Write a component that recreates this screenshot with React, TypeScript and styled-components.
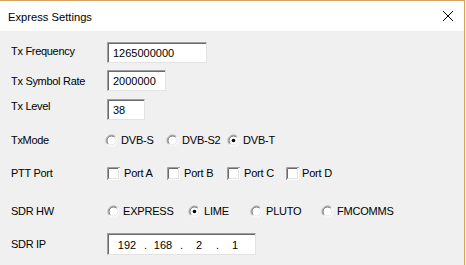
import React from "react";
import styled, { createGlobalStyle } from "styled-components";

const Global = createGlobalStyle`
  html, body { margin: 0; padding: 0; }
  body {
    width: 466px;
    height: 265px;
    overflow: hidden;
    background: #f8f6f2;
    font-family: "Liberation Sans", Arial, sans-serif;
  }
`;

const Screen = styled.div`
  width: 466px;
  height: 265px;
  display: flex;
  background: #f8f6f2;
`;

const Window = styled.div`
  width: 464px;
  height: 264px;
  border-top: 1px solid #d9a45d;
  border-right: 1px solid #d9a45d;
  display: flex;
  flex-direction: column;
  background: #f0f0f0;
`;

const TitleBar = styled.div`
  height: 30px;
  background: #ffffff;
  display: flex;
  align-items: center;
  justify-content: space-between;
  padding: 0 10px 0 8px;
`;

const Title = styled.span`
  font-size: 11.2px;
  color: #000;
  letter-spacing: 0;
  margin-top: 1px;
`;

const CloseIcon = styled.svg`
  width: 12px;
  height: 12px;
  display: block;
`;

const Body = styled.div`
  flex: 1;
  display: flex;
  flex-direction: column;
  padding-top: 11px;
  font-size: 11px;
  color: #000;
`;

const Row = styled.div<{ $mt: number; $h: number }>`
  display: flex;
  align-items: center;
  height: ${(p) => p.$h}px;
  margin-top: ${(p) => p.$mt}px;
`;

const Label = styled.div<{ $shift?: number }>`
  width: 96px;
  padding-left: 11px;
  letter-spacing: -0.3px;
  position: relative;
  top: ${(p) => p.$shift ?? 0}px;
`;

const TextBox = styled.div<{ $w: number }>`
  box-sizing: border-box;
  width: ${(p) => p.$w}px;
  height: 100%;
  background: #fff;
  border-top: 1px solid #a0a0a0;
  border-left: 1px solid #a0a0a0;
  border-right: 1px solid #e3e3e3;
  border-bottom: 1px solid #e3e3e3;
  box-shadow: inset 1px 1px 0 #696969;
  display: flex;
  align-items: center;
  padding-left: 5px;
  padding-top: 1px;
`;

const IpBox = styled(TextBox)`
  padding-left: 2px;
`;

const Octet = styled.span`
  width: 34px;
  text-align: center;
`;

const Dot = styled.span`
  width: 2px;
  text-align: center;
`;

const Options = styled.div`
  display: flex;
  align-items: center;
`;

const Option = styled.div<{ $w: number; $gap: number }>`
  width: ${(p) => p.$w}px;
  display: flex;
  align-items: center;
  gap: ${(p) => p.$gap}px;
`;

const OptText = styled.span`
  letter-spacing: -0.2px;
`;

const Mark = styled.svg`
  width: 13px;
  height: 13px;
  display: block;
  flex: none;
`;

function Radio({ checked }: { checked?: boolean }) {
  return (
    <Mark viewBox="0 0 13 13">
      <circle cx="6.5" cy="6.5" r="5.5" fill="#fff" />
      <path d="M10.4 2.6 A5.5 5.5 0 0 0 2.6 10.4" fill="none" stroke="#a0a0a0" strokeWidth="1" />
      <path d="M9.7 3.3 A4.5 4.5 0 0 0 3.3 9.7" fill="none" stroke="#696969" strokeWidth="1" />
      <path d="M10.4 2.6 A5.5 5.5 0 0 1 2.6 10.4" fill="none" stroke="#ffffff" strokeWidth="1" />
      <path d="M9.7 3.3 A4.5 4.5 0 0 1 3.3 9.7" fill="none" stroke="#e3e3e3" strokeWidth="1" />
      {checked && <circle cx="6.5" cy="6.5" r="1.8" fill="#000" />}
    </Mark>
  );
}

function Check() {
  return (
    <Mark viewBox="0 0 13 13">
      <rect x="0" y="0" width="13" height="13" fill="#fff" />
      <path d="M0.5 13 V0.5 H13" fill="none" stroke="#a0a0a0" />
      <path d="M1.5 12 V1.5 H12" fill="none" stroke="#696969" />
      <path d="M1.5 11.5 H11.5 V1" fill="none" stroke="#e3e3e3" />
    </Mark>
  );
}

export default function App() {
  return (
    <>
      <Global />
      <Screen>
        <Window>
          <TitleBar>
            <Title>Express Settings</Title>
            <CloseIcon viewBox="0 0 12 12">
              <path d="M1 1 L11 11 M11 1 L1 11" stroke="#000" strokeWidth="1" />
            </CloseIcon>
          </TitleBar>
          <Body>
            <Row $mt={0} $h={21}>
              <Label $shift={-2}>Tx Frequency</Label>
              <TextBox $w={100}>1265000000</TextBox>
            </Row>
            <Row $mt={7} $h={21}>
              <Label>Tx Symbol Rate</Label>
              <TextBox $w={59}>2000000</TextBox>
            </Row>
            <Row $mt={8} $h={21}>
              <Label $shift={-4}>Tx Level</Label>
              <TextBox $w={38}>38</TextBox>
            </Row>
            <Row $mt={12} $h={16}>
              <Label>TxMode</Label>
              <Options style={{ marginLeft: -2 }}>
                <Option $w={61} $gap={3}>
                  <Radio />
                  <OptText>DVB-S</OptText>
                </Option>
                <Option $w={61} $gap={3}>
                  <Radio />
                  <OptText>DVB-S2</OptText>
                </Option>
                <Option $w={61} $gap={3}>
                  <Radio checked />
                  <OptText>DVB-T</OptText>
                </Option>
              </Options>
            </Row>
            <Row $mt={17} $h={16}>
              <Label>PTT Port</Label>
              <Options>
                <Option $w={60} $gap={4}>
                  <Check />
                  <OptText>Port A</OptText>
                </Option>
                <Option $w={60} $gap={4}>
                  <Check />
                  <OptText>Port B</OptText>
                </Option>
                <Option $w={59} $gap={4}>
                  <Check />
                  <OptText>Port C</OptText>
                </Option>
                <Option $w={60} $gap={3}>
                  <Check />
                  <OptText>Port D</OptText>
                </Option>
              </Options>
            </Row>
            <Row $mt={22} $h={16}>
              <Label>SDR HW</Label>
              <Options>
                <Option $w={81} $gap={3}>
                  <Radio />
                  <OptText>EXPRESS</OptText>
                </Option>
                <Option $w={62} $gap={3}>
                  <Radio checked />
                  <OptText>LIME</OptText>
                </Option>
                <Option $w={71} $gap={3}>
                  <Radio />
                  <OptText>PLUTO</OptText>
                </Option>
                <Option $w={90} $gap={3}>
                  <Radio />
                  <OptText>FMCOMMS</OptText>
                </Option>
              </Options>
            </Row>
            <Row $mt={14} $h={22}>
              <Label>SDR IP</Label>
              <IpBox $w={149}>
                <Octet>192</Octet>
                <Dot>.</Dot>
                <Octet>168</Octet>
                <Dot>.</Dot>
                <Octet>2</Octet>
                <Dot>.</Dot>
                <Octet>1</Octet>
              </IpBox>
            </Row>
          </Body>
        </Window>
      </Screen>
    </>
  );
}
